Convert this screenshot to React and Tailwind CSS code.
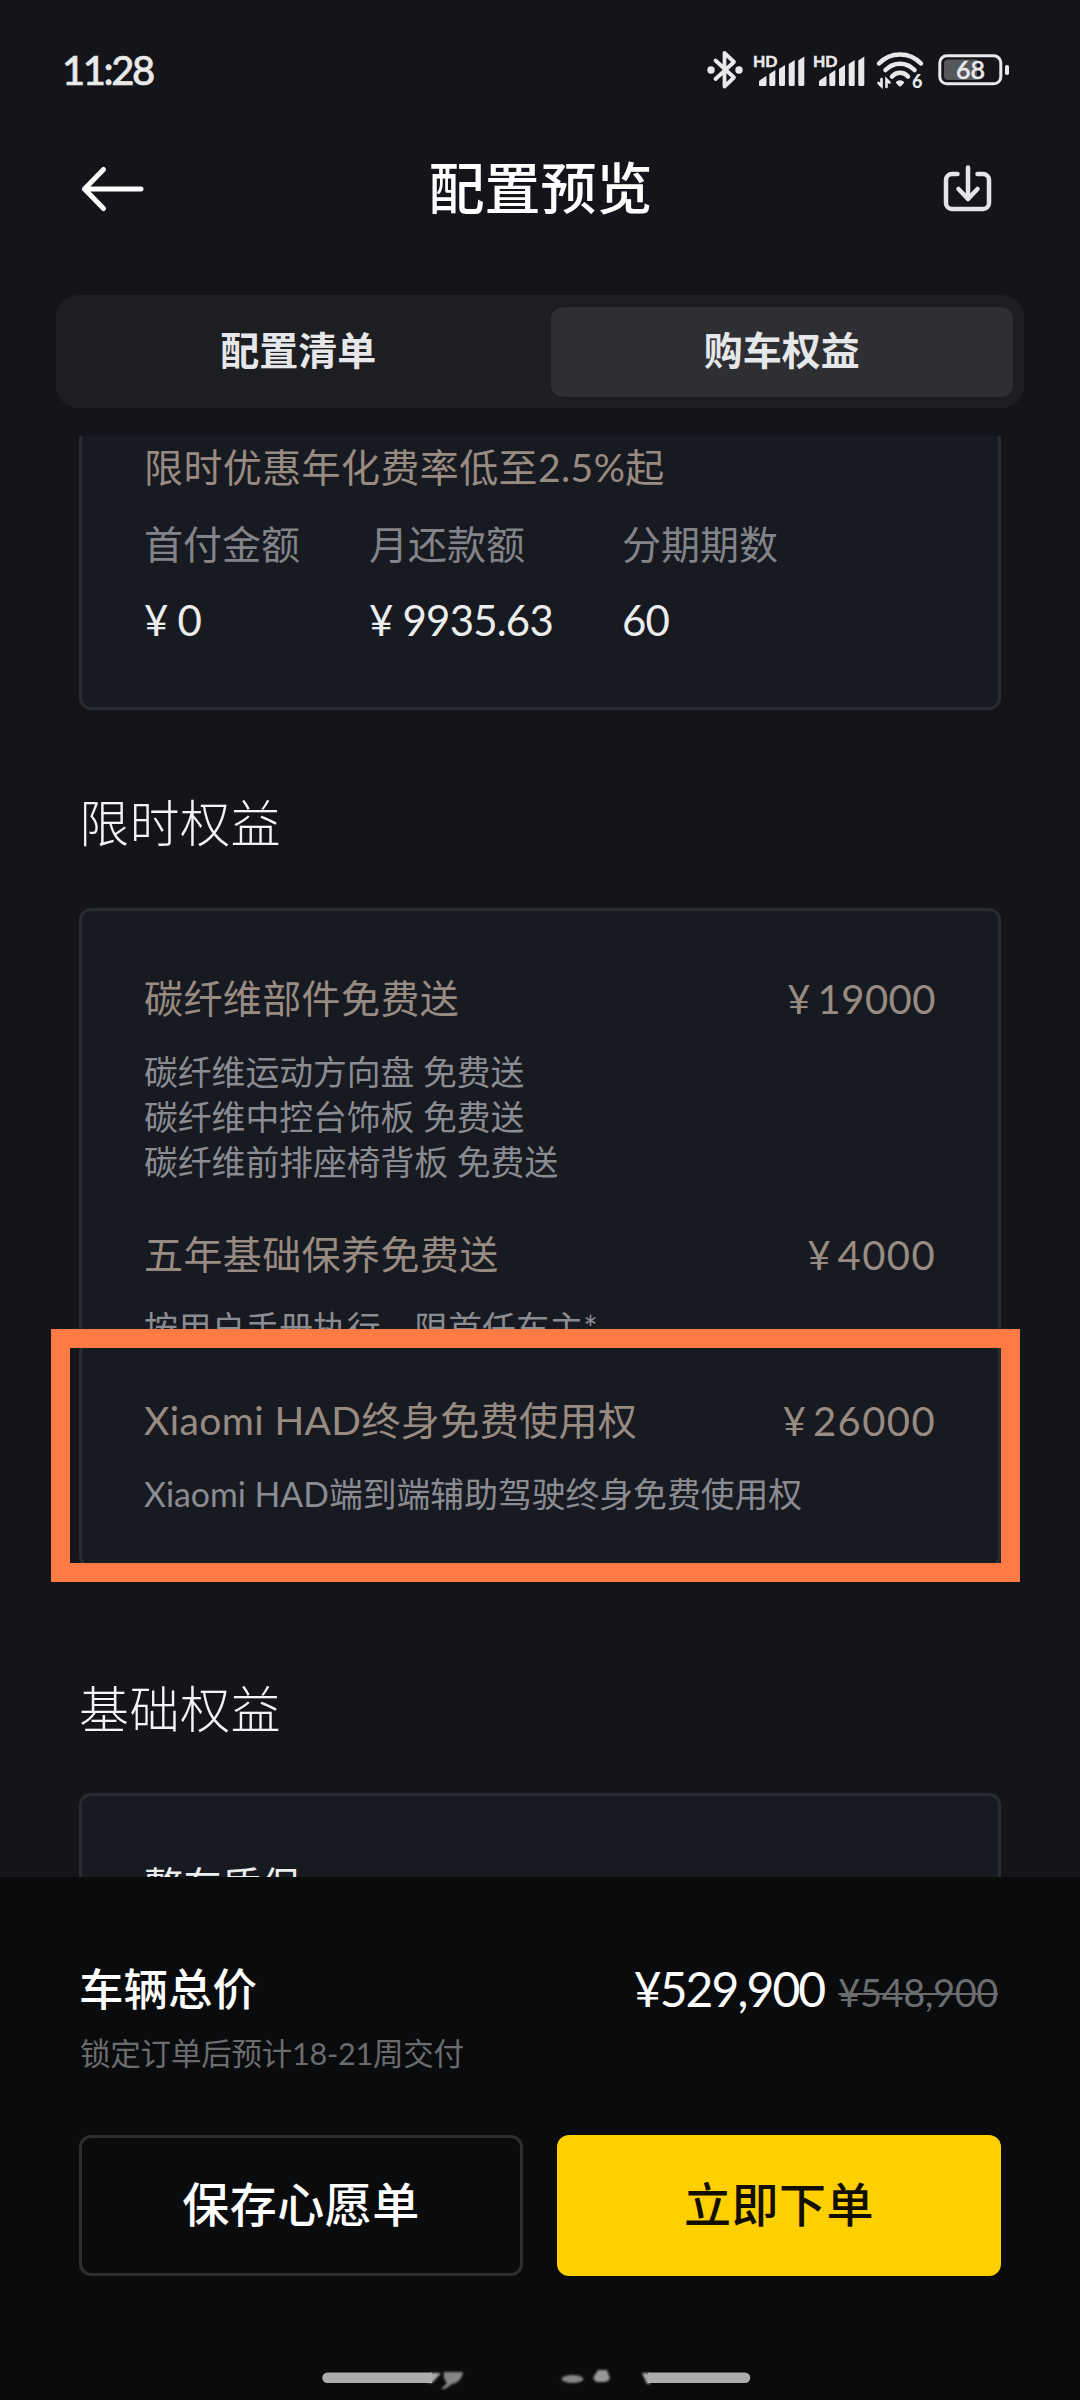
import React, { useState } from 'react';

const benefits = [
  {
    title: '碳纤维部件免费送',
    price: '19000',
    tight: true,
    lines: ['碳纤维运动方向盘 免费送', '碳纤维中控台饰板 免费送', '碳纤维前排座椅背板 免费送'],
  },
  { title: '五年基础保养免费送', price: '4000', lines: ['按用户手册执行，限首任车主*'] },
  { title: 'Xiaomi HAD终身免费使用权', price: '26000', lines: ['Xiaomi HAD端到端辅助驾驶终身免费使用权'] },
];

const tabs = ['配置清单', '购车权益'];

const Signal = () => (
  <svg className="w-[52px] h-[34px] overflow-visible" viewBox="0 0 52 34" fill="#e9e9ea">
    <text x="-1" y="14" fontSize="16" fontWeight="700" fontFamily="Lato, sans-serif" stroke="#e9e9ea" strokeWidth="0.5">HD</text>
    <path d="M5.500 32.500v-4.500l6.500-4.500v9z" stroke="#e9e9ea" strokeLinejoin="round" />
    <path d="M15.300 21l6-4v14.500a1.500 1.500 0 0 1-1.500 1.500h-3a1.500 1.500 0 0 1-1.500-1.500z" />
    <path d="M25 16l6-4v19.500a1.500 1.500 0 0 1-1.500 1.500h-3a1.500 1.500 0 0 1-1.500-1.500z" />
    <path d="M34.700 11l6-4v24.500a1.500 1.500 0 0 1-1.500 1.500h-3a1.500 1.500 0 0 1-1.500-1.500z" />
    <path d="M44.300 7.500l6-4v28a1.500 1.500 0 0 1-1.500 1.500h-3a1.500 1.500 0 0 1-1.500-1.500z" />
  </svg>
);

const StatusBar = () => (
  <div className="h-[120px] pl-[62px] pr-[71px] pt-5 flex items-center justify-between">
    <span className="text-[40px] leading-[40px] font-medium text-[#e9e9ea] tracking-[-2.4px] [-webkit-text-stroke:0.6px_#e9e9ea]">11:28</span>
    <div className="flex items-center">
      <svg className="w-9 h-10 mr-[11px]" viewBox="0 0 36 40" fill="none" stroke="#e9e9ea" strokeWidth="3.800" strokeLinejoin="round" strokeLinecap="round">
        <path d="M8.500 10.500L27 27.500L17.500 36.500V3L27 12L8.500 29" />
        <circle cx="4" cy="20" r="1.800" fill="#e9e9ea" />
        <circle cx="32" cy="20" r="1.800" fill="#e9e9ea" />
      </svg>
      <div className="flex gap-2 mr-[10px]">
        <Signal />
        <Signal />
      </div>
      <svg className="w-[48px] h-[38px] mr-[14px] overflow-visible" viewBox="0 0 48 38" fill="none" stroke="#e9e9ea" strokeWidth="4.500" strokeLinecap="round">
        <path d="M3 12.500C14.500 0.500 33.500 0.500 45 12.500" />
        <path d="M9.500 19C17.500 10.500 30.500 10.500 38.500 19" />
        <path d="M16 25.500C20.500 20.500 27.500 20.500 32 25.500" />
        <path d="M21.500 31.500q2.500-1.500 5 0l-2.500 2.500z" strokeWidth="3" strokeLinejoin="round" fill="#e9e9ea" />
        <path d="M5.500 28v7l-3-3M10.500 36v-7.500l3 3" strokeWidth="2.600" />
        <text x="36" y="37" fontSize="18" fontWeight="900" fontFamily="Lato, sans-serif" fill="#e9e9ea" stroke="none">6</text>
      </svg>
      <svg className="w-[71px] h-8" viewBox="0 0 71 32">
        <rect x="1.800" y="1.800" width="61" height="28" rx="7" fill="none" stroke="#e9e9ea" strokeWidth="3" />
        <path d="M10 5.500h29v20.500h-29a4 4 0 0 1-4-4v-12.500a4 4 0 0 1 4-4z" fill="#56575a" />
        <rect x="67" y="11" width="4" height="10" rx="1.800" fill="#e9e9ea" />
        <text x="32.500" y="24.500" textAnchor="middle" fontSize="25" fontWeight="500" fontFamily="Lato, sans-serif" fill="#e9e9ea" stroke="#e9e9ea" strokeWidth="0.5">68</text>
      </svg>
    </div>
  </div>
);

const Header = () => (
  <header className="h-[138px] pl-20 pr-[79px] flex items-center justify-between">
    <svg className="w-[66px] h-[50px]" viewBox="0 0 66 50" fill="none" stroke="#fff" strokeWidth="5" strokeLinecap="round" strokeLinejoin="round">
      <path d="M61 25H4.500M23.500 5.500L4.500 25L23.500 44.500" />
    </svg>
    <h1 className="text-[56px] leading-[60px] pb-0.5 font-medium text-white">配置预览</h1>
    <svg className="w-[66px] h-[50px]" viewBox="0 0 66 50" fill="none" stroke="#e4e5e7" strokeWidth="4.500" strokeLinecap="round" strokeLinejoin="round">
      <path d="M22.500 10H17a6 6 0 0 0-6 6v23a6 6 0 0 0 6 6h31a6 6 0 0 0 6-6V16a6 6 0 0 0-6-6h-5.500" />
      <path d="M33 3.500V35M23.500 25L33 35L42.500 25" />
    </svg>
  </header>
);

const Benefit = ({ title, price, tight, lines }) => (
  <div>
    <div className="h-[60px] flex items-center justify-between text-[39px] text-[#988b81]">
      <span className="tracking-[0.4px] pb-px">{title}</span>
      <span className="flex gap-[7px] text-[40px]">
        <span>¥</span>
        <span className={tight ? 'tracking-[0.5px]' : 'tracking-[1.4px]'}>{price}</span>
      </span>
    </div>
    <div className="pt-[21px] text-[33.8px] leading-[45px] text-[#8b8c91]">
      {lines.map((line) => (
        <p key={line} className="whitespace-nowrap">{line}</p>
      ))}
    </div>
  </div>
);

const Finance = ({ label, value, className }) => (
  <div className={className}>
    <p className="text-[39px] leading-[60px] text-[#838489]">{label}</p>
    <p className="mt-[16px] text-[42px] leading-[60px] tracking-[-0.8px] text-[#eceded]">{value}</p>
  </div>
);

const App = () => {
  const [active, setActive] = useState(1);

  return (
    <div className="w-[1080px] h-[2400px] overflow-hidden flex flex-col bg-[#14151a] font-[Lato,'Noto_Sans_CJK_SC',sans-serif]">
      <StatusBar />
      <Header />
      <nav className="mx-14 mt-[37px] h-[113px] shrink-0 rounded-[22px] bg-[#1d1e22] p-[11.500px] flex gap-[22px]">
        {tabs.map((tab, i) => (
          <button
            key={tab}
            onClick={() => setActive(i)}
            className={`flex-1 rounded-xl pb-1 text-[39px] leading-[60px] font-bold text-[#e6e7e9] ${active === i ? 'bg-[#2e2f33]' : ''}`}
          >
            {tab}
          </button>
        ))}
      </nav>

      <main className="mt-7 h-[1441px] shrink-0 overflow-hidden px-[79px]">
        <section className="h-[274px] rounded-b-[12px] border-3 border-t-0 border-[#292b30] bg-[#181a22] px-[62px] pt-px">
          <p className="text-[39px] leading-[60px] tracking-[0.4px] text-[#988b81]">限时优惠年化费率低至2.5%起</p>
          <div className="mt-[17px] flex">
            <Finance label="首付金额" value="¥ 0" className="w-[225px]" />
            <Finance label="月还款额" value="¥ 9935.63" className="w-[253px]" />
            <Finance label="分期期数" value="60" />
          </div>
        </section>

        <h2 className="mt-[83px] text-[50px] leading-[60px] tracking-[0.5px] font-light text-[#f4f4f6]">限时权益</h2>
        <section className="relative mt-[55px] h-[660px] rounded-[12px] border-3 border-[#292b30] bg-[#181a22] px-[62px] pt-[58px] flex flex-col">
          <Benefit {...benefits[0]} />
          <div className="mt-[40px]"><Benefit {...benefits[1]} /></div>
          <div className="mt-[40px]"><Benefit {...benefits[2]} /></div>
          <div className="absolute -left-[31px] top-[418px] w-[969px] h-[253px] border-[19.500px] border-[#ff7a45]"></div>
        </section>

        <h2 className="mt-[111px] text-[50px] leading-[60px] tracking-[0.5px] font-light text-[#f4f4f6]">基础权益</h2>
        <section className="mt-[54px] h-[300px] rounded-[12px] border-3 border-[#292b30] bg-[#181a22] px-[62px] pt-[59px]">
          <p className="text-[39px] leading-[60px] text-[#eceded]">整车质保</p>
        </section>
      </main>

      <footer className="flex-1 bg-[#0a0b0d] px-[79px] pt-[82px] flex flex-col">
        <div className="h-[60px] flex items-center justify-between text-white">
          <span className="text-[44.500px] leading-[60px] font-medium">车辆总价</span>
          <p className="flex items-baseline gap-3.5 pt-0.5 pr-[3px]">
            <span className="text-[48px] leading-[60px] tracking-[-1.9px]">¥529,900</span>
            <span className="text-[38px] tracking-[-0.4px] text-[#6b6c6e] line-through decoration-2">¥548,900</span>
          </p>
        </div>
        <p className="mt-[15px] pl-px text-[30.600px] leading-[40px] tracking-[-0.3px] text-[#6b6c6e]">锁定订单后预计18-21周交付</p>
        <div className="mt-[61px] grid grid-cols-2 gap-[34px]">
          <button className="h-[141px] pb-1 rounded-[12px] border-3 border-[#2d2e30] text-[47px] leading-[60px] tracking-[0.5px] font-medium text-white">保存心愿单</button>
          <button className="h-[141px] pb-1 rounded-[12px] bg-[#ffd000] text-[47px] leading-[60px] tracking-[0.5px] font-medium text-[#120f00]">立即下单</button>
        </div>
        <svg className="mt-[84px] -ml-[79px] w-[1080px] h-[40px] shrink-0" viewBox="0 2360 1080 40" fill="#adadaf">
          <defs>
            <filter id="soft"><feGaussianBlur stdDeviation="1.300" /></filter>
          </defs>
          <path d="M327.500 2372.500H432V2383H327.500a5.200 5.200 0 0 1 0-10.500z" />
          <path d="M648 2372.500H745a5.200 5.200 0 0 1 0 10.500H648z" />
          <g filter="url(#soft)">
            <path d="M430 2373h11l-9 10h-4zM649 2373h-7l5 11h3z" />
            <path d="M444 2372h19c-1 7-5 11-11 12l-7 5h-4l6-6c-3-3-4-7-3-11z" fill="#858687" />
            <ellipse cx="572.500" cy="2379" rx="11" ry="4" fill="#858687" />
            <path d="M598 2370h9l3 9-4 3h-10l-3-4z" fill="#99999a" />
          </g>
        </svg>
      </footer>
    </div>
  );
};

export default App;
